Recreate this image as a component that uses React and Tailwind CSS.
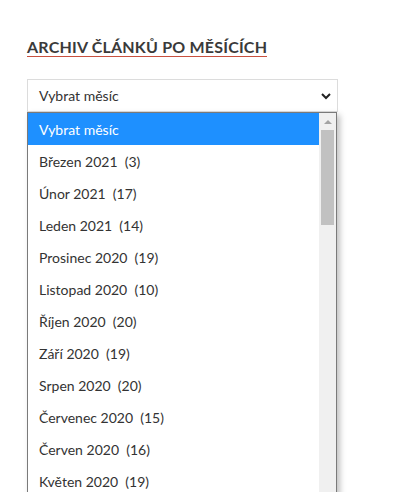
import React from "react";

const items = [
  "Březen 2021\u00a0 (3)",
  "Únor 2021\u00a0 (17)",
  "Leden 2021\u00a0 (14)",
  "Prosinec 2020\u00a0 (19)",
  "Listopad 2020\u00a0 (10)",
  "Říjen 2020\u00a0 (20)",
  "Září 2020\u00a0 (19)",
  "Srpen 2020\u00a0 (20)",
  "Červenec 2020\u00a0 (15)",
  "Červen 2020\u00a0 (16)",
  "Květen 2020\u00a0 (19)",
];

export default function App() {
  return (
    <div className="w-[393px] h-[492px] overflow-hidden bg-white" style={{ fontFamily: "Lato, 'Noto Sans', sans-serif" }}>
      <div className="pl-[27px] pt-[38px]">
        <h2 className="flex w-fit text-[16px] leading-[18px] font-bold uppercase tracking-[0.2px] text-[#3a3a3a] border-b border-[#c8503f]">
          Archiv článků po měsících
        </h2>
        <div className="mt-[22px] w-[311px] h-[33px] border border-[#dcdcdc] flex items-center justify-between pl-[11px] pr-[4px] text-[14px] text-[#333]">
          <span>Vybrat měsíc</span>
          <svg width="12" height="8" viewBox="0 0 12 8" className="mr-[1px]">
            <path d="M2 2 L6 6 L10 2" fill="none" stroke="#222" strokeWidth="2" />
          </svg>
        </div>
        <div className="relative w-[310px] h-[400px] border border-[#7a7a7a] bg-white shadow-[3px_3px_6px_rgba(0,0,0,0.25)] flex">
          <div className="flex-1 flex flex-col">
            <div className="h-[32px] shrink-0 flex items-center px-[11px] bg-[#1e90ff] text-white text-[14px]">Vybrat měsíc</div>
            {items.map((t) => (
              <div key={t} className="h-[32px] shrink-0 flex items-center px-[11px] text-[14px] text-[#333]">
                {t}
              </div>
            ))}
          </div>
          <div className="w-[17px] bg-[#f0f0f0] flex flex-col items-center">
            <div className="h-[17px] flex items-center justify-center">
              <svg width="8" height="5" viewBox="0 0 8 5"><path d="M0 5 L4 1 L8 5 Z" fill="#a3a3a3" /></svg>
            </div>
            <div className="w-[13px] h-[95px] bg-[#c1c1c1]" />
          </div>
        </div>
      </div>
    </div>
  );
}
